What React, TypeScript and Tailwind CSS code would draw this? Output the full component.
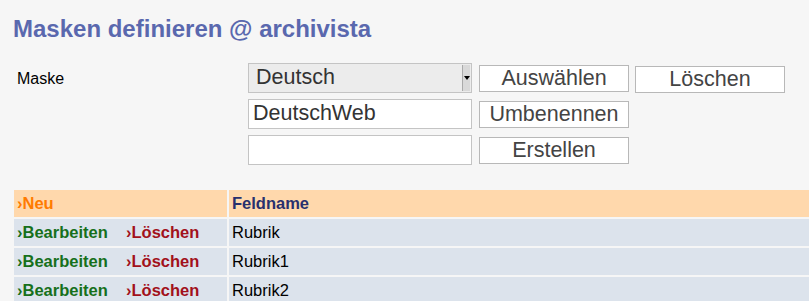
import React from "react";

const font = { fontFamily: '"Liberation Sans", Arial, sans-serif' };

function Btn({ children, w = "w-[150px]" }: { children: React.ReactNode; w?: string }) {
  return (
    <div
      className={`${w} h-[27px] bg-white border border-[#b8b8b8] flex items-center justify-center text-[21.5px] leading-none text-[#444]`}
    >
      {children}
    </div>
  );
}

export default function App() {
  const rows = ["Rubrik", "Rubrik1", "Rubrik2"];
  return (
    <div className="w-[809px] h-[301px] overflow-hidden bg-[#f6f6f6]" style={font}>
      <h1 className="pl-[13px] pt-[15px] text-[24px] leading-[28px] font-bold text-[#5a68ae]">
        Masken definieren @ archivista
      </h1>
      <div className="flex mt-[20px]">
        <div className="w-[248px] pl-[17px] pt-[7px] text-[16px] leading-[18px] text-black">Maske</div>
        <div className="flex flex-col gap-[6px]">
          <div className="flex items-start">
            <div className="w-[224px] h-[30px] bg-[#ececec] border border-[#c4c4c4] flex items-center relative">
              <span className="pl-[7px] text-[21.5px] leading-none text-[#333]">Deutsch</span>
              <div className="absolute right-[1px] top-[1px] bottom-[1px] w-[8px] bg-[#d9d9d9] border-l border-[#aaa] flex items-center justify-center">
                <div className="w-0 h-0 border-l-[3px] border-r-[3px] border-t-[4px] border-l-transparent border-r-transparent border-t-black" />
              </div>
            </div>
            <div className="ml-[7px] mt-[2px]">
              <Btn>Auswählen</Btn>
            </div>
            <div className="ml-[6px] mt-[3px]">
              <Btn>Löschen</Btn>
            </div>
          </div>
          <div className="flex items-start">
            <div className="w-[224px] h-[30px] bg-white border border-[#c4c4c4] flex items-center">
              <span className="pl-[4px] text-[21.5px] leading-none text-[#333]">DeutschWeb</span>
            </div>
            <div className="ml-[7px] mt-[2px]">
              <Btn>Umbenennen</Btn>
            </div>
          </div>
          <div className="flex items-start">
            <div className="w-[224px] h-[30px] bg-white border border-[#c4c4c4]" />
            <div className="ml-[7px] mt-[2px]">
              <Btn>Erstellen</Btn>
            </div>
          </div>
        </div>
      </div>
      <div className="mt-[25px] ml-[14px] grid grid-cols-[213px_1fr] gap-[2px] text-[16.5px] leading-none">
        <div className="h-[27px] bg-[#ffd8ac] flex items-center pl-[3px] font-bold text-[#ff7b00]">›Neu</div>
        <div className="h-[27px] bg-[#ffd8ac] flex items-center pl-[3px] font-bold text-[#28306e]">Feldname</div>
        {rows.map((r) => (
          <React.Fragment key={r}>
            <div className="h-[27px] bg-[#dce3ec] flex items-center pl-[3px] font-bold">
              <span className="text-[#16701b] w-[109px]">›Bearbeiten</span>
              <span className="text-[#a2111b]">›Löschen</span>
            </div>
            <div className="h-[27px] bg-[#dce3ec] flex items-center pl-[3px] text-black">{r}</div>
          </React.Fragment>
        ))}
      </div>
    </div>
  );
}
